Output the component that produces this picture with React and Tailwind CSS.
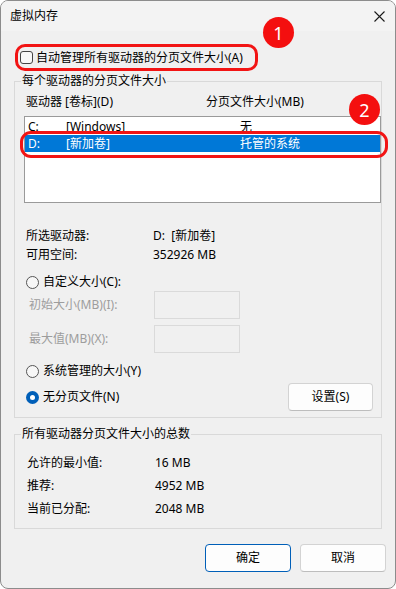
import React from "react";

const font = "font-['Noto_Sans','Noto_Sans_CJK_SC',sans-serif]";

const Radio = ({ checked }) =>
  checked ? (
    <span className="flex h-[13px] w-[13px] items-center justify-center rounded-full bg-[#005fb8]">
      <span className="h-[5px] w-[5px] rounded-full bg-white" />
    </span>
  ) : (
    <span className="h-[13px] w-[13px] rounded-full border border-[#555] bg-[#f7f7f7]" />
  );

const Badge = ({ n, className }) => (
  <div
    className={
      "absolute flex h-[31px] w-[31px] items-center justify-center rounded-full bg-[#f40f0f] text-[18px] text-white " +
      className
    }
  >
    {n}
  </div>
);

const App = () => {
  return (
    <div className={`h-[589px] w-[396px] bg-white text-[12px] leading-[16px] text-black ${font}`}>
      <div className="relative flex h-[589px] w-[396px] flex-col overflow-hidden rounded-[8px] border border-[#8c8c8c] bg-[#f0f0f0]">
        {/* title bar */}
        <div className="flex h-[30px] items-center justify-between bg-[#f3f3f3] pl-[9px] pr-[10px]">
          <span>虚拟内存</span>
          <svg width="11" height="11" viewBox="0 0 11 11">
            <path d="M0.5 0.5 L10.5 10.5 M10.5 0.5 L0.5 10.5" stroke="#1a1a1a" strokeWidth="1.1" />
          </svg>
        </div>

        <div className="flex flex-col px-[13px]">
          {/* auto-manage checkbox, annotated */}
          <div className="ml-[1px] mt-[13px] flex h-[27px] w-[243px] items-center gap-[3px] rounded-[10px] border-[3px] border-[#f21414] pl-[2px]">
            <span className="h-[13px] w-[13px] rounded-[3px] border border-[#444] bg-[#f8f8f8]" />
            <span>自动管理所有驱动器的分页文件大小(A)</span>
          </div>

          {/* per-drive group */}
          <fieldset className="mt-[2px] border border-[#d9d9d9] pb-[6px]">
            <legend className="ml-[6px] px-[1px]">每个驱动器的分页文件大小</legend>
            <div className="flex flex-col pl-[9px]">
              <div className="mt-[5px] flex h-[16px] pl-[2px]">
                <span className="w-[180px]">驱动器 [卷标](D)</span>
                <span>分页文件大小(MB)</span>
              </div>
              <div className="mt-[6px] h-[87px] border border-[#9a9a9a] bg-white pt-[1px]">
                <div className="flex h-[17px] items-center pl-[3px]">
                  <span className="w-[38px]">C:</span>
                  <span className="w-[174px]">[Windows]</span>
                  <span>无</span>
                </div>
                <div className="flex h-[17px] items-center bg-[#0078d7] pl-[3px] text-white">
                  <span className="w-[38px]">D:</span>
                  <span className="w-[174px]">[新加卷]</span>
                  <span>托管的系统</span>
                </div>
              </div>

              <div className="mt-[25px] flex h-[16px] pl-[2px]">
                <span className="w-[127px]">所选驱动器:</span>
                <span>D:&nbsp;&nbsp;[新加卷]</span>
              </div>
              <div className="mt-[3px] flex h-[16px] pl-[2px]">
                <span className="w-[127px]">可用空间:</span>
                <span>352926 MB</span>
              </div>

              <div className="mt-[11px] flex h-[16px] items-center gap-[4px] pl-[2px]">
                <Radio />
                <span>自定义大小(C):</span>
              </div>
              <div className="mt-[1px] flex h-[28px] items-center pl-[5px] text-[#9d9d9d]">
                <span className="w-[125px]">初始大小(MB)(I):</span>
                <span className="h-[28px] w-[86px] border border-[#dadada]" />
              </div>
              <div className="mt-[6px] flex h-[28px] items-center pl-[5px] text-[#9d9d9d]">
                <span className="w-[125px]">最大值(MB)(X):</span>
                <span className="h-[28px] w-[86px] border border-[#dadada]" />
              </div>

              <div className="mt-[10px] flex h-[16px] items-center gap-[4px] pl-[2px]">
                <Radio />
                <span>系统管理的大小(Y)</span>
              </div>
              <div className="mt-[4px] flex h-[28px] items-center justify-between pl-[2px] pr-[8px]">
                <div className="flex items-center gap-[4px]">
                  <Radio checked />
                  <span>无分页文件(N)</span>
                </div>
                <button className="h-[28px] w-[85px] rounded-[4px] border border-[#d3d3d3] border-b-[#bdbdbd] bg-[#fdfdfd]">
                  设置(S)
                </button>
              </div>
            </div>
          </fieldset>

          {/* totals group */}
          <fieldset className="mt-[8px] border border-[#d9d9d9] pb-[11px]">
            <legend className="ml-[6px] px-[1px]">所有驱动器分页文件大小的总数</legend>
            <div className="flex flex-col gap-[7px] pl-[12px] pt-[13px]">
              <div className="flex h-[16px]">
                <span className="w-[128px]">允许的最小值:</span>
                <span>16 MB</span>
              </div>
              <div className="flex h-[16px]">
                <span className="w-[128px]">推荐:</span>
                <span>4952 MB</span>
              </div>
              <div className="flex h-[16px]">
                <span className="w-[128px]">当前已分配:</span>
                <span>2048 MB</span>
              </div>
            </div>
          </fieldset>
        </div>

        <div className="mt-[15px] flex justify-end gap-[9px] pr-[9px]">
          <button className="h-[28px] w-[86px] rounded-[4px] border border-[#005fb8] bg-[#fdfdfd]">确定</button>
          <button className="h-[28px] w-[86px] rounded-[4px] border border-[#d3d3d3] border-b-[#bdbdbd] bg-[#fdfdfd]">
            取消
          </button>
        </div>

        {/* annotations */}
        <div className="absolute left-[19px] top-[130px] h-[27px] w-[368px] rounded-[11px] border-[3px] border-[#f21414]" />
        <Badge n="1" className="left-[262px] top-[16px]" />
        <Badge n="2" className="left-[348px] top-[93px]" />
      </div>
    </div>
  );
};

export default App;
